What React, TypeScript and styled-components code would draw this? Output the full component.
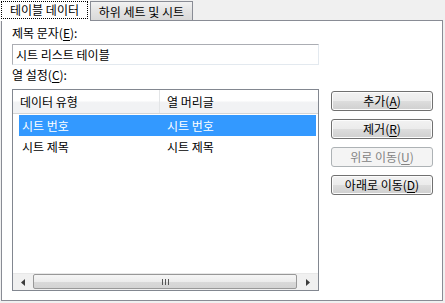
import React from 'react'
import styled, { createGlobalStyle, css } from 'styled-components'

const GlobalStyle = createGlobalStyle`
  html, body {
    margin: 0;
    padding: 0;
    background: #f0f0f0;
  }
  body {
    font-family: "Noto Sans CJK KR", "Noto Sans", sans-serif;
    font-size: 12px;
    color: #000;
  }
`

const Dialog = styled.div`
  width: 445px;
  height: 303px;
  box-sizing: border-box;
  padding: 0 2px 2px 1px;
  display: flex;
  flex-direction: column;
  background: #f0f0f0;
`

const TabStrip = styled.div`
  height: 21px;
  display: flex;
  align-items: flex-end;
  margin-left: -1px;
  position: relative;
  z-index: 1;
`

const Tab = styled.div<{ $active?: boolean }>`
  box-sizing: border-box;
  display: flex;
  align-items: center;
  justify-content: center;
  line-height: 16px;
  white-space: nowrap;
  ${({ $active }) =>
    $active
      ? css`
          width: 90px;
          height: 21px;
          background: #fff;
          padding: 1px 2px 2px 1px;
        `
      : css`
          width: 103px;
          height: 19px;
          margin-bottom: 1px;
          border: 1px solid #898c95;
          border-bottom: none;
          background: linear-gradient(#f2f2f2, #e3e3e3 50%, #d9d9d9);
          padding-top: 1px;
        `}
`

const FocusRect = styled.span`
  flex: 1;
  align-self: stretch;
  display: flex;
  align-items: center;
  justify-content: center;
  border: 1px dotted #000;
`

const Panel = styled.div`
  flex: 1;
  margin-top: -1px;
  background: #fff;
  border: 1px solid #898c95;
  display: flex;
  gap: 12px;
  padding: 4px 9px 9px 10px;
`

const LeftColumn = styled.div`
  width: 307px;
  display: flex;
  flex-direction: column;
`

const Label = styled.div<{ $gap?: number }>`
  line-height: 16px;
  margin-bottom: ${({ $gap }) => $gap ?? 3}px;
`

const Key = styled.span`
  text-decoration: underline;
  text-underline-offset: 2px;
`

const TextField = styled.div`
  box-sizing: border-box;
  height: 21px;
  border: 1px solid #abadb3;
  border-right-color: #e3e9ef;
  border-bottom-color: #e3e9ef;
  padding: 0 3px;
  line-height: 19px;
  margin-bottom: 2px;
`

const ListBox = styled.div`
  flex: 1;
  border: 1px solid #828790;
  display: flex;
  flex-direction: column;
`

const HeaderRow = styled.div`
  height: 23px;
  display: grid;
  grid-template-columns: 147px 1fr;
  background: linear-gradient(#ffffff, #ffffff 45%, #f1f2f4 55%, #f1f2f4);
  border-bottom: 1px solid #d5d5d5;
  margin-bottom: 1px;
`

const HeaderCell = styled.div<{ $divider?: boolean }>`
  display: flex;
  align-items: center;
  padding-left: 7px;
  ${({ $divider }) => $divider && css`border-right: 1px solid #e3e5e7;`}
`

const Row = styled.div<{ $selected?: boolean }>`
  height: 21px;
  margin: 0 2px 0 6px;
  padding-left: 3px;
  display: grid;
  grid-template-columns: 145px 1fr;
  align-items: center;
  background: ${({ $selected }) => ($selected ? '#3399ff' : 'transparent')};
  color: ${({ $selected }) => ($selected ? '#fff' : '#000')};
`

const Spacer = styled.div`
  flex: 1;
`

const ScrollBar = styled.div`
  height: 17px;
  display: flex;
  background: #f0f0f0;
  border-top: 1px solid #e8e8e8;
  box-sizing: border-box;
`

const Arrow = styled.div`
  width: 20px;
  display: flex;
  align-items: center;
  justify-content: center;
`

const Thumb = styled.div`
  flex: 1;
  margin: 0 1px 1px 0;
  border: 1px solid #989898;
  border-radius: 2px;
  background: linear-gradient(#f6f6f6, #ececec 50%, #d9d9d9 51%, #d3d3d3);
  display: flex;
  align-items: center;
  justify-content: center;
  gap: 2px;
`

const Grip = styled.span`
  width: 1px;
  height: 6px;
  background: #555;
`

const ButtonColumn = styled.div`
  width: 102px;
  padding-top: 66px;
  display: flex;
  flex-direction: column;
  gap: 8px;
`

const Button = styled.div<{ $disabled?: boolean }>`
  box-sizing: border-box;
  height: 20px;
  border: 1px solid ${({ $disabled }) => ($disabled ? '#adb2b5' : '#707070')};
  border-radius: 3px;
  box-shadow: inset 0 0 0 1px ${({ $disabled }) => ($disabled ? '#f4f4f4' : '#fcfcfc')};
  background: ${({ $disabled }) =>
    $disabled ? '#f4f4f4' : 'linear-gradient(#f2f2f2, #ebebeb 50%, #dddddd 51%, #cfcfcf)'};
  color: ${({ $disabled }) => ($disabled ? '#838383' : '#000')};
  display: flex;
  align-items: center;
  justify-content: center;
  line-height: 16px;
`

const rows = [
  { type: '시트 번호', header: '시트 번호', selected: true },
  { type: '시트 제목', header: '시트 제목', selected: false },
]

const ArrowLeft = () => (
  <svg width="4" height="7" viewBox="0 0 4 7">
    <path d="M4 0 L0 3.5 L4 7 Z" fill="#3c3c3c" />
  </svg>
)

const ArrowRight = () => (
  <svg width="4" height="7" viewBox="0 0 4 7">
    <path d="M0 0 L4 3.5 L0 7 Z" fill="#3c3c3c" />
  </svg>
)

export default function App() {
  return (
    <>
      <GlobalStyle />
      <Dialog>
        <TabStrip>
          <Tab $active>
            <FocusRect>테이블 데이터</FocusRect>
          </Tab>
          <Tab>하위 세트 및 시트</Tab>
        </TabStrip>
        <Panel>
          <LeftColumn>
            <Label>
              제목 문자(<Key>E</Key>):
            </Label>
            <TextField>시트 리스트 테이블</TextField>
            <Label $gap={6}>
              열 설정(<Key>C</Key>):
            </Label>
            <ListBox>
              <HeaderRow>
                <HeaderCell $divider>데이터 유형</HeaderCell>
                <HeaderCell>열 머리글</HeaderCell>
              </HeaderRow>
              {rows.map((r) => (
                <Row key={r.type} $selected={r.selected}>
                  <span>{r.type}</span>
                  <span>{r.header}</span>
                </Row>
              ))}
              <Spacer />
              <ScrollBar>
                <Arrow>
                  <ArrowLeft />
                </Arrow>
                <Thumb>
                  <Grip />
                  <Grip />
                  <Grip />
                </Thumb>
                <Arrow>
                  <ArrowRight />
                </Arrow>
              </ScrollBar>
            </ListBox>
          </LeftColumn>
          <ButtonColumn>
            <Button>
              추가(<Key>A</Key>)
            </Button>
            <Button>
              제거(<Key>R</Key>)
            </Button>
            <Button $disabled>
              위로 이동(<Key>U</Key>)
            </Button>
            <Button>
              아래로 이동(<Key>D</Key>)
            </Button>
          </ButtonColumn>
        </Panel>
      </Dialog>
    </>
  )
}
